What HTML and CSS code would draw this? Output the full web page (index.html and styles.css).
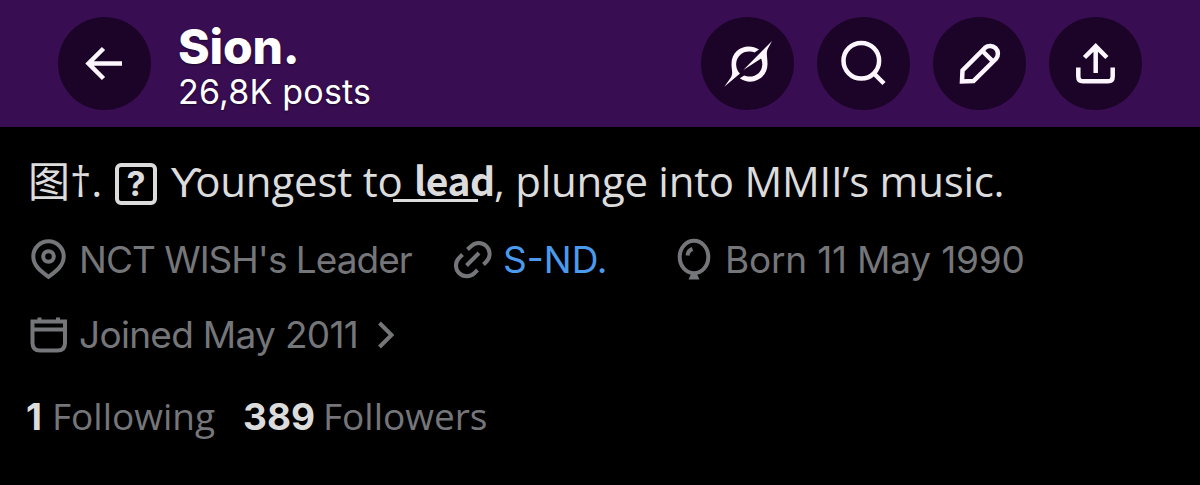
FILE: index.html
```
<!DOCTYPE html>
<html lang="en">
<head>
  <meta charset="UTF-8" />
  <meta name="viewport" content="width=device-width, initial-scale=1.0"/>
  <title>Sion.</title>
  <link rel="stylesheet" href="styles.css">
</head>
<body>

  <header class="topbar">
    <button class="round-btn" aria-label="Back">
      <svg viewBox="0 0 93 93"><path d="M64 46.5H31M45.5 31.5L30.5 46.5L45.5 61.5"/></svg>
    </button>
    <div class="heading">
      <h1 class="name">Sion.</h1>
      <p class="posts">26,8K posts</p>
    </div>
    <div class="actions">
      <button class="round-btn" aria-label="Grok">
        <svg class="solid" viewBox="0 0 93 93">
          <path d="M58 32.500C47 25.500 30.500 31 30.500 47C30.500 54 32.500 56.500 29.500 61L23.300 69.700L39 56.500C31 48 36.500 34.400 48 34.400C50.500 34.400 52 34.800 53.500 35.400Z"/>
          <path d="M71 24L42.300 53L60.200 41.500C64 51.500 57.500 59.600 48.500 59.600C46.500 59.600 45 59.200 43.200 58.500L38.800 61.200C50 69.500 66.500 62 66.500 47C66.500 39.500 64.500 35.500 67.500 30.500Z"/>
        </svg>
      </button>
      <button class="round-btn" aria-label="Search">
        <svg viewBox="0 0 93 93"><circle cx="44.300" cy="43.800" r="17.800"/><path d="M57 56.500L67 66.500"/></svg>
      </button>
      <button class="round-btn" aria-label="Edit">
        <svg viewBox="0 0 93 93"><path d="M29 64.500L29.500 53.500L52 30.800A7.800 7.800 0 0 1 63 41.800L40.500 64Z"/><path d="M49.500 34L59.500 44"/></svg>
      </button>
      <button class="round-btn" aria-label="Share">
        <svg viewBox="0 0 93 93"><path d="M46.700 56V29M35.500 40.500L46.700 29.300L57.900 40.500M29.300 50.500V59.500Q29.300 64.300 34 64.300H59Q63.700 64.300 63.700 59.500V50.500"/></svg>
      </button>
    </div>
  </header>

  <main class="profile">
    <p class="bio">
      <span class="lead-in">图†.</span>
      <span class="qbox">?</span>
      <span class="bio-start"><span class="hook">Ƴ</span>oungest to</span>
      <b class="lead">lead</b><span class="bio-end">, plunge into MMII’s music.</span>
    </p>

    <div class="meta">
      <span class="item place">
        <svg viewBox="0 0 40 44"><path d="M20.500 38.800C12.500 33 5.300 27.500 5.300 18.500A15.200 15.200 0 0 1 35.700 18.500C35.700 27.500 28.500 33 20.500 38.800Z"/><circle cx="20.500" cy="18.500" r="5.300"/></svg>
        <span>NCT WISH's Leader</span>
      </span>
      <span class="item link">
        <svg viewBox="0 0 40 44"><path d="M15.500 11.500L19 8.300A10.500 10.500 0 0 1 34.500 23.500L31.500 26.500M10.500 16.500L7 20A10.500 10.500 0 0 0 22.500 35L25.500 32M14.500 27.500L27 15"/></svg>
        <a>S-ND.</a>
      </span>
      <span class="item born">
        <svg viewBox="0 0 40 44"><ellipse cx="20" cy="19" rx="14.300" ry="16.200"/><path d="M13.500 17.500Q14 12.500 18.500 11"/><path class="knot" d="M17.500 35H22.500L25.500 41.500H14.500Z"/></svg>
        <span>Born 11 May 1990</span>
      </span>
    </div>

    <div class="meta joined">
      <span class="item">
        <svg viewBox="0 0 40 44"><path d="M4.500 8.500H37V30Q37 37.500 29.500 37.500H12Q4.500 37.500 4.500 30ZM4.500 16.500H37M11.500 4.500V8.500M30 4.500V8.500"/></svg>
        <span>Joined May 2011</span>
        <svg class="chevron" viewBox="0 0 20 32"><path d="M3.500 4L15.500 16L3.500 28"/></svg>
      </span>
    </div>

    <div class="stats">
      <b class="following-count">1</b><span class="following">Following</span>
      <b class="followers-count">389</b><span class="followers">Followers</span>
    </div>
  </main>

</body>
</html>
```
FILE: styles.css
```
* {
  box-sizing: border-box;
}
body {
  margin: 0;
  height: 485px;
  overflow: hidden;
  background: #000;
  color: #dcdcdd;
  font-family: "Open Sans", "Noto Sans CJK SC", sans-serif;
}
h1, p {
  margin: 0;
}
.topbar {
  display: flex;
  align-items: flex-start;
  height: 127px;
  padding: 17px 58px 0;
  background: #380d52;
  color: #fff;
}
.round-btn {
  width: 93px;
  height: 93px;
  padding: 0;
  border: none;
  border-radius: 50%;
  background: #1c0429;
}
svg {
  display: block;
  fill: none;
  stroke: currentColor;
  stroke-width: 4;
}
.round-btn svg {
  width: 93px;
  height: 93px;
  stroke-width: 4.5;
  color: #fdf6ff;
}
.round-btn .solid {
  fill: currentColor;
  stroke: none;
}
.heading {
  margin-left: 27px;
  font-family: Inter, sans-serif;
  text-shadow: 0 1px 2px rgba(0,0,0,0.5);
  white-space: nowrap;
}
.name {
  height: 59px;
  line-height: 60px;
  font-size: 48px;
  font-weight: 800;
  letter-spacing: -0.2px;
}
.posts {
  height: 34px;
  line-height: 32px;
  font-size: 34px;
  letter-spacing: 0.2px;
}
.actions {
  display: flex;
  gap: 23px;
  margin-left: auto;
}
.profile {
  padding-left: 28px;
  white-space: nowrap;
}
.bio {
  display: flex;
  align-items: center;
  height: 108px;
  font-size: 42px;
  line-height: 60px;
}
.lead-in {
  width: 87px;
}
.qbox {
  width: 42px;
  height: 42px;
  margin-top: 5px;
  border: 4px solid;
  border-radius: 6px;
  font: bold 34px/34px Inter, sans-serif;
  text-align: center;
}
.bio-start {
  width: 242px;
  margin-left: 15px;
  letter-spacing: -0.2px;
}
.hook {
  margin: 0 -7px 0 -2px;
}
.lead {
  position: relative;
  width: 80px;
  padding-bottom: 4px;
  font-family: "Noto Sans CJK SC", sans-serif;
  font-size: 39px;
  letter-spacing: -0.5px;
}
/* the rule starts under the end of the previous word */
.lead::before {
  content: "";
  position: absolute;
  left: -21px;
  top: 50px;
  width: 85px;
  height: 3px;
  background: currentColor;
}
.bio-end {
  letter-spacing: -0.28px;
}
.meta {
  display: flex;
  height: 50px;
  color: #75767a;
  font-family: Inter, sans-serif;
  font-size: 37px;
  line-height: 50px;
}
.item {
  display: flex;
  align-items: center;
}
.item svg {
  width: 40px;
  height: 44px;
  margin-right: 11px;
}
.item .chevron {
  width: 20px;
  height: 32px;
  margin: 0 0 0 18px;
}
.place {
  width: 424px;
  letter-spacing: -1px;
}
.link {
  width: 222px;
}
.link a {
  color: #4a9bee;
}
.born {
  letter-spacing: -0.2px;
}
.knot {
  fill: currentColor;
  stroke: none;
}
.joined {
  margin-top: 25px;
  letter-spacing: -0.7px;
}
.stats {
  display: flex;
  height: 50px;
  margin-top: 31px;
  font-size: 37px;
  line-height: 50px;
}
.stats b {
  margin-left: -2px;
  padding-top: 1px;
  font-family: Inter, sans-serif;
}
.stats span {
  color: #75767a;
}
.following-count {
  width: 26px;
}
.following {
  width: 193px;
}
.followers-count {
  width: 80px;
}
```
